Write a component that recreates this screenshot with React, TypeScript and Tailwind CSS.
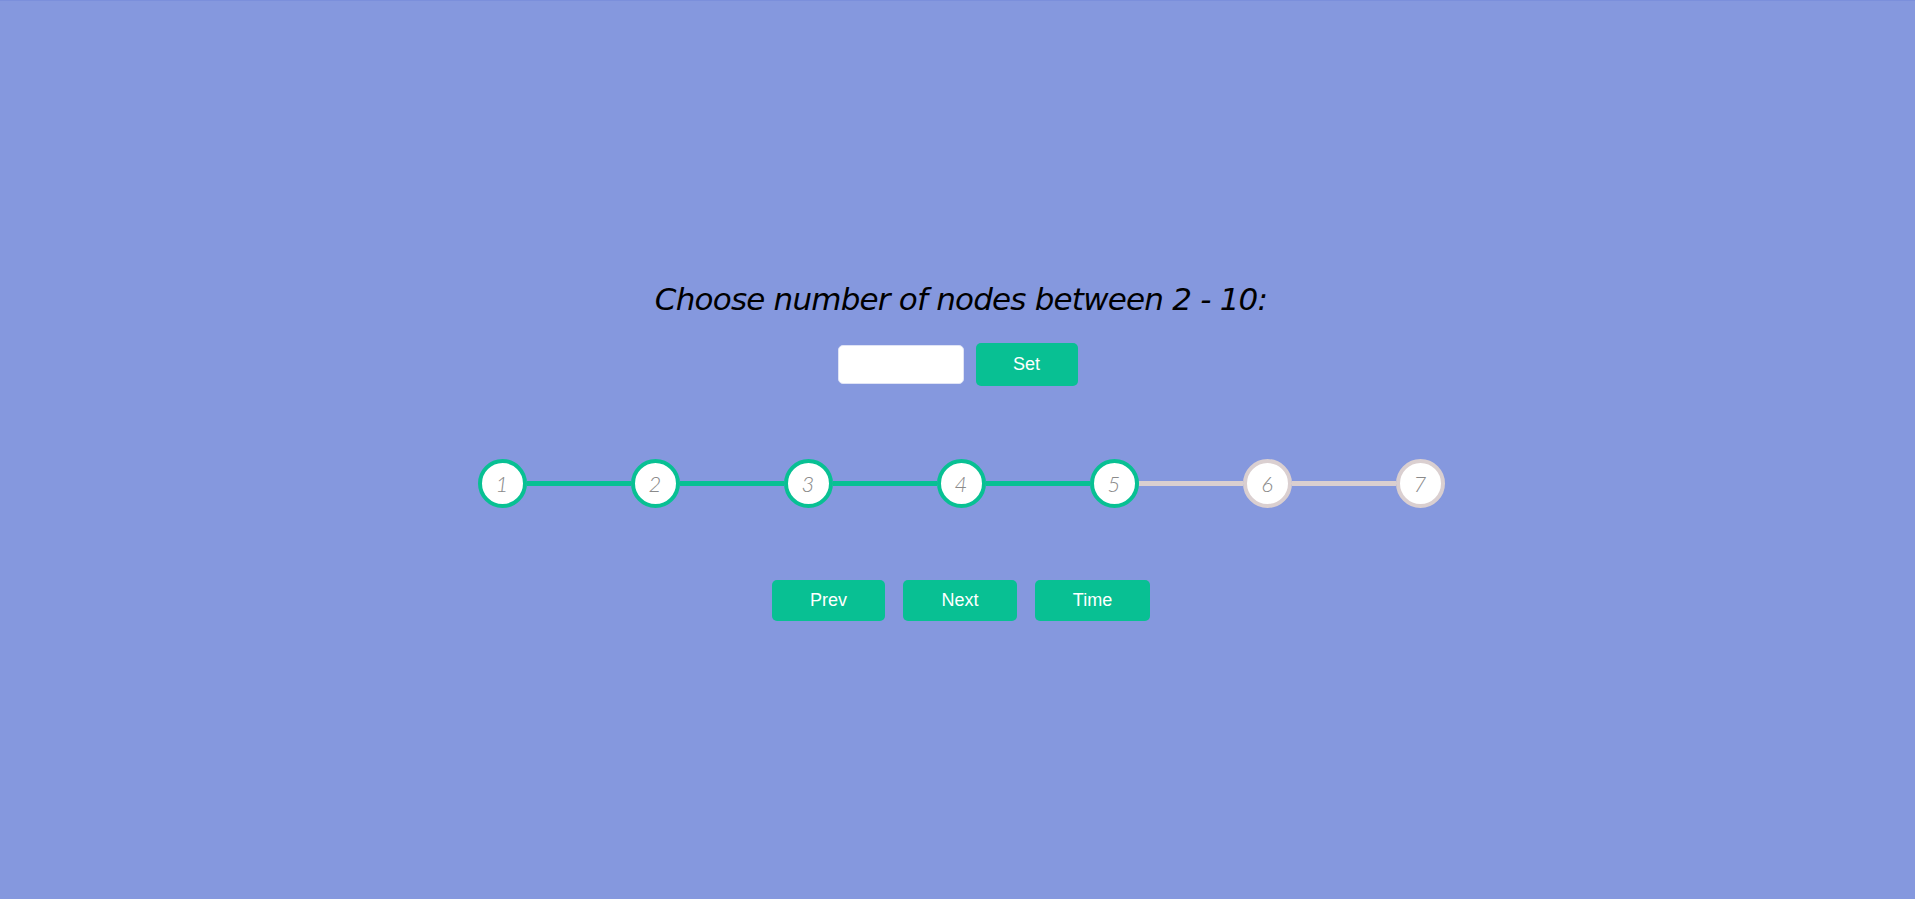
import React from 'react';

const steps = [1, 2, 3, 4, 5, 6, 7];
const current = 5;

export default function App() {
  return (
    <div className="min-h-screen w-full bg-[#8598de] border-t border-[#7b8fdb] flex flex-col items-center pl-[7px] font-['Liberation_Sans',Arial,sans-serif]">
      {/* Heading */}
      <h1 className="mt-[276px] text-[31px] leading-[44px] italic text-black font-['DejaVu_Sans',sans-serif] tracking-[-0.8px]">
        Choose number of nodes between 2 - 10:
      </h1>

      {/* Node count input */}
      <div className="mt-[22px] -ml-[7px] flex items-center gap-[12px]">
        <input
          type="text"
          className="w-[126px] h-[39px] rounded-[5px] bg-white border border-[#dfe3f5] outline-none px-2 text-[16px]"
        />
        <button className="w-[102px] h-[43px] rounded-[5px] bg-[#08c093] text-white text-[18px]">
          Set
        </button>
      </div>

      {/* Progress steps */}
      <div className="mt-[73px] flex items-center">
        {steps.map((n, i) => {
          const done = n <= current;
          return (
            <React.Fragment key={n}>
              {i > 0 && (
                <div
                  className={
                    done
                      ? 'w-[104px] h-[5px] bg-[#08c093]'
                      : 'w-[104px] h-[5px] bg-[#dacfd0]'
                  }
                />
              )}
              <div
                className={
                  done
                    ? 'w-[49px] h-[49px] rounded-full bg-white border-[4px] border-[#08c093] flex items-center justify-center'
                    : 'w-[49px] h-[49px] rounded-full bg-white border-[4px] border-[#dacfd0] flex items-center justify-center'
                }
              >
                <span className="text-[22px] italic font-light text-[#8a8a8a] font-['Lato',sans-serif]">{n}</span>
              </div>
            </React.Fragment>
          );
        })}
      </div>

      {/* Controls */}
      <div className="mt-[72px] flex items-center gap-[18px]">
        <button className="w-[113px] h-[41px] rounded-[5px] bg-[#08c093] text-white text-[18px]">Prev</button>
        <button className="w-[114px] h-[41px] rounded-[5px] bg-[#08c093] text-white text-[18px]">Next</button>
        <button className="w-[115px] h-[41px] rounded-[5px] bg-[#08c093] text-white text-[18px]">Time</button>
      </div>
    </div>
  );
}
